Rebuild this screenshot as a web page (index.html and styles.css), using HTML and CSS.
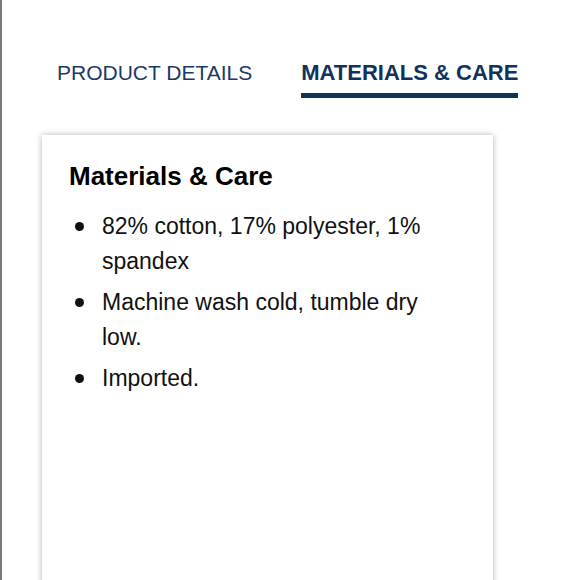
FILE: index.html
```html
<!DOCTYPE html>
<html>
<head>
<meta charset="utf-8">
<link rel="stylesheet" href="styles.css">
</head>
<body>
<div class="page">
  <nav class="tabs">
    <div class="tab">PRODUCT DETAILS</div>
    <div class="tab tab-active">MATERIALS &amp; CARE</div>
  </nav>
  <section class="card">
    <h2 class="card-title">Materials &amp; Care</h2>
    <ul class="list">
      <li>82% cotton, 17% polyester, 1% spandex</li>
      <li>Machine wash cold, tumble dry low.</li>
      <li>Imported.</li>
    </ul>
  </section>
</div>
</body>
</html>
```

FILE: styles.css
```css
html, body {
  margin: 0;
  padding: 0;
  background: #fff;
}
.page {
  min-height: 580px;
  border-left: 2px solid #7a7a7a;
  font-family: "Liberation Sans", Arial, sans-serif;
  overflow: hidden;
}
.tabs {
  display: flex;
  align-items: flex-end;
  gap: 49px;
  padding: 60px 0 0 55px;
}
.tab {
  font-size: 21px;
  line-height: 26px;
  color: #1a3a66;
  padding-bottom: 7px;
  border-bottom: 5px solid transparent;
}
.tab-active {
  font-size: 22px;
  font-weight: bold;
  color: #12325e;
  border-bottom-color: #12325e;
}
.card {
  margin: 37px 0 0 40px;
  width: 451px;
  min-height: 480px;
  box-shadow: 0 0 6px rgba(0,0,0,0.3);
  padding: 26px 40px 0 27px;
  box-sizing: border-box;
}
.card-title {
  margin: 0 0 18px 0;
  font-size: 26px;
  line-height: 30px;
  font-weight: bold;
  color: #000;
}
.list {
  margin: 0;
  padding: 0 0 0 33px;
  list-style: none;
  font-size: 23px;
  line-height: 35px;
  color: #111;
}
.list li {
  position: relative;
  margin-bottom: 6px;
}
.list li::before {
  content: "";
  position: absolute;
  left: -27px;
  top: 13px;
  width: 9px;
  height: 9px;
  border-radius: 50%;
  background: #111;
}
```
